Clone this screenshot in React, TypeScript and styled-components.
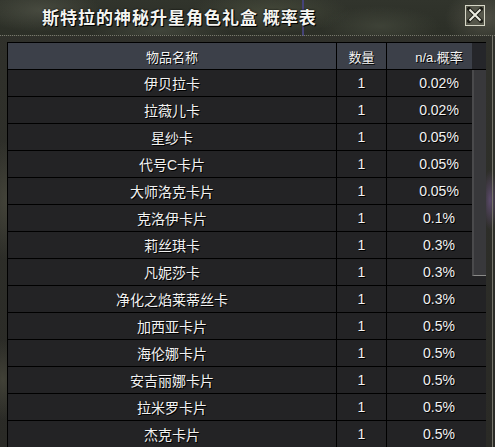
import React from "react";
import styled, { createGlobalStyle } from "styled-components";

const Global = createGlobalStyle`
  html, body { margin: 0; padding: 0; background: #262622; }
  * { box-sizing: border-box; }
`;

const rows: [string, string, string][] = [
  ["伊贝拉卡", "1", "0.02%"],
  ["拉薇儿卡", "1", "0.02%"],
  ["星纱卡", "1", "0.05%"],
  ["代号C卡片", "1", "0.05%"],
  ["大师洛克卡片", "1", "0.05%"],
  ["克洛伊卡片", "1", "0.1%"],
  ["莉丝琪卡", "1", "0.3%"],
  ["凡妮莎卡", "1", "0.3%"],
  ["净化之焰莱蒂丝卡", "1", "0.3%"],
  ["加西亚卡片", "1", "0.5%"],
  ["海伦娜卡片", "1", "0.5%"],
  ["安吉丽娜卡片", "1", "0.5%"],
  ["拉米罗卡片", "1", "0.5%"],
  ["杰克卡片", "1", "0.5%"],
];

const Window = styled.div`
  width: 495px;
  height: 447px;
  overflow: hidden;
  position: relative;
  display: flex;
  flex-direction: column;
  background:
    linear-gradient(90deg, transparent 492px, #77766c 492px, #77766c 493px, transparent 493px),
    radial-gradient(ellipse 8px 30px at 490px 200px, #5a4a6a 0%, transparent 100%),
    radial-gradient(ellipse 30px 60px at 8px 200px, #44443a 0%, transparent 100%),
    radial-gradient(ellipse 20px 40px at 3px 380px, #414137 0%, transparent 100%),
    linear-gradient(180deg, #30312b 0%, #2a2a26 100%);
  font-family: "Noto Sans CJK SC", "Liberation Sans", sans-serif;
`;

const TitleBar = styled.div`
  height: 36px;
  flex: none;
  display: flex;
  align-items: center;
  justify-content: space-between;
  padding: 0 10px 0 42px;
  border-bottom: 1px dotted #77776c;
  background:
    linear-gradient(90deg, transparent 302px, #454378 302px, #454378 304px, transparent 304px),
    radial-gradient(ellipse 60px 22px at 40px 10px, #474a3f 0%, transparent 100%),
    radial-gradient(ellipse 70px 20px at 160px 30px, #40443a 0%, transparent 100%),
    radial-gradient(ellipse 80px 22px at 270px 12px, #444839 0%, transparent 100%),
    radial-gradient(ellipse 60px 20px at 380px 26px, #3e4237 0%, transparent 100%),
    radial-gradient(ellipse 40px 30px at 485px 18px, #4e4e44 0%, transparent 100%),
    linear-gradient(180deg, #31342c 0%, #2c2f27 100%);
`;

const Title = styled.h1`
  margin: 0;
  font-size: 17px;
  font-weight: bold;
  letter-spacing: 1px;
  color: #f4f4f0;
  text-shadow: 1px 1px 0 #000, 0 0 2px #000;
  line-height: 1;
  margin-top: -2px;
`;

const CloseBtn = styled.button`
  width: 20px;
  height: 21px;
  padding: 0;
  margin-top: -5px;
  border: 1px solid #d6d6c6;
  background: #55564a;
  display: flex;
  align-items: center;
  justify-content: center;
  cursor: pointer;
`;

const Body = styled.div`
  flex: 1;
  padding: 6px 9px 0 7px;
`;

const TableWrap = styled.div`
  position: relative;
  width: 479px;
  border-left: 1px solid #000;
  border-top: 1px solid #000;
`;

const Row = styled.div<{ $head?: boolean }>`
  display: grid;
  grid-template-columns: 329px 50px 1fr;
  height: 27px;
  background: ${(p) => (p.$head ? "#3c4049" : "#232325")};
  border-bottom: 1px solid #000;
`;

const Cell = styled.div<{ $head?: boolean; $shift?: number }>`
  display: flex;
  align-items: center;
  justify-content: center;
  padding-left: ${(p) => p.$shift ?? 0}px;
  border-right: 1px solid #000;
  color: #f2f2f2;
  font-size: ${(p) => (p.$head ? 13 : 14)}px;
  font-family: "Liberation Sans", "Noto Sans CJK SC", sans-serif;
  text-shadow: 1px 1px 0 #000;
  white-space: nowrap;
  &:last-child { border-right: none; }
`;

const ScrollCol = styled.div`
  position: absolute;
  top: -1px;
  right: 0;
  width: 14px;
  display: flex;
  flex-direction: column;
`;

const ScrollCap = styled.div`
  height: 28px;
  background: #25262a;
  border-top: 1px solid #000;
  border-bottom: 1px solid #000;
`;

const Thumb = styled.div`
  height: 206px;
  background: #38383b;
  border-left: 2px solid #4a4a4c;
  border-bottom: 1px solid #8a8a88;
`;

const CloseIcon = () => (
  <svg width="16" height="16" viewBox="0 0 16 16">
    <path d="M2 2 L14 14 M14 2 L2 14" stroke="#1e1e18" strokeWidth="4" strokeLinecap="square" />
    <path d="M2.5 2.5 L13.5 13.5 M13.5 2.5 L2.5 13.5" stroke="#ecece0" strokeWidth="2" />
  </svg>
);

export default function App() {
  return (
    <>
      <Global />
      <Window>
        <TitleBar>
          <Title>斯特拉的神秘升星角色礼盒 概率表</Title>
          <CloseBtn aria-label="close">
            <CloseIcon />
          </CloseBtn>
        </TitleBar>
        <Body>
          <TableWrap>
            <Row $head>
              <Cell $head>物品名称</Cell>
              <Cell $head>数量</Cell>
              <Cell $head $shift={5}>n/a.概率</Cell>
            </Row>
            {rows.map(([name, qty, rate]) => (
              <Row key={name}>
                <Cell>{name}</Cell>
                <Cell>{qty}</Cell>
                <Cell $shift={5}>{rate}</Cell>
              </Row>
            ))}
            <ScrollCol>
              <ScrollCap />
              <Thumb />
            </ScrollCol>
          </TableWrap>
        </Body>
      </Window>
    </>
  );
}
